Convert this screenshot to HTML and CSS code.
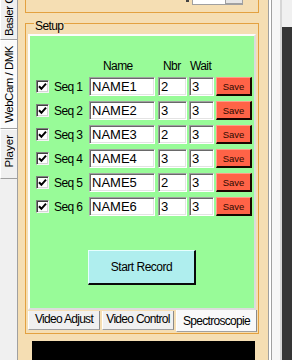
FILE: index.html
```html
<!DOCTYPE html>
<html lang="fr">
<head>
    <meta charset="UTF-8">
    <meta name="viewport" content="width=device-width, initial-scale=1.0">
    <title>Spectroscopie</title>
    <link rel="stylesheet" href="styles.css">
</head>
<body>
<div class="window">
    <!-- Onglets verticaux à gauche -->
    <div class="side-tabs">
        <div class="side-tab first"><span>Basler Cam</span></div>
        <div class="side-tab active"><span>WebCam / DMK</span></div>
        <div class="side-tab last"><span>Player</span></div>
    </div>

    <div class="main">
        <!-- Panneau du haut (coupé) -->
        <div class="top-panel">
            <span class="top-mark"></span>
            <span class="top-combo"><span class="top-combo-btn"></span></span>
        </div>

        <!-- Groupe Setup -->
        <div class="setup">
            <span class="setup-title">Setup</span>
            <div class="tab-control">
                <div class="tab-page">
                    <div class="seq-grid">
                        <span></span><span></span>
                        <span class="head head-name">Name</span>
                        <span class="head head-nbr">Nbr</span>
                        <span class="head head-wait">Wait</span>
                        <span></span>

                        <span class="check"><svg width="9" height="9" viewBox="0 0 9 9"><polyline points="1,4.2 3.4,6.8 8,1.6" fill="none" stroke="#000" stroke-width="2"/></svg></span>
                        <span class="seq-label">Seq 1</span>
                        <input class="field f-name" type="text" value="NAME1">
                        <input class="field f-nbr" type="text" value="2">
                        <input class="field f-wait" type="text" value="3">
                        <button class="save">Save</button>

                        <span class="check"><svg width="9" height="9" viewBox="0 0 9 9"><polyline points="1,4.2 3.4,6.8 8,1.6" fill="none" stroke="#000" stroke-width="2"/></svg></span>
                        <span class="seq-label">Seq 2</span>
                        <input class="field f-name" type="text" value="NAME2">
                        <input class="field f-nbr" type="text" value="3">
                        <input class="field f-wait" type="text" value="3">
                        <button class="save">Save</button>

                        <span class="check"><svg width="9" height="9" viewBox="0 0 9 9"><polyline points="1,4.2 3.4,6.8 8,1.6" fill="none" stroke="#000" stroke-width="2"/></svg></span>
                        <span class="seq-label">Seq 3</span>
                        <input class="field f-name" type="text" value="NAME3">
                        <input class="field f-nbr" type="text" value="2">
                        <input class="field f-wait" type="text" value="3">
                        <button class="save">Save</button>

                        <span class="check"><svg width="9" height="9" viewBox="0 0 9 9"><polyline points="1,4.2 3.4,6.8 8,1.6" fill="none" stroke="#000" stroke-width="2"/></svg></span>
                        <span class="seq-label">Seq 4</span>
                        <input class="field f-name" type="text" value="NAME4">
                        <input class="field f-nbr" type="text" value="3">
                        <input class="field f-wait" type="text" value="3">
                        <button class="save">Save</button>

                        <span class="check"><svg width="9" height="9" viewBox="0 0 9 9"><polyline points="1,4.2 3.4,6.8 8,1.6" fill="none" stroke="#000" stroke-width="2"/></svg></span>
                        <span class="seq-label">Seq 5</span>
                        <input class="field f-name" type="text" value="NAME5">
                        <input class="field f-nbr" type="text" value="2">
                        <input class="field f-wait" type="text" value="3">
                        <button class="save">Save</button>

                        <span class="check"><svg width="9" height="9" viewBox="0 0 9 9"><polyline points="1,4.2 3.4,6.8 8,1.6" fill="none" stroke="#000" stroke-width="2"/></svg></span>
                        <span class="seq-label">Seq 6</span>
                        <input class="field f-name" type="text" value="NAME6">
                        <input class="field f-nbr" type="text" value="3">
                        <input class="field f-wait" type="text" value="3">
                        <button class="save">Save</button>
                    </div>

                    <button class="start-btn">Start Record</button>
                </div>

                <!-- Onglets du bas -->
                <div class="tab-strip">
                    <div class="tab tab-adjust">Video Adjust</div>
                    <div class="tab tab-control-v">Video Control</div>
                    <div class="tab tab-spectro selected">Spectroscopie</div>
                </div>
            </div>
        </div>

        <!-- Zone vidéo -->
        <div class="video"></div>
    </div>

    <!-- Bord droit -->
    <div class="right-strip">
        <span class="rs-line"></span>
        <span class="rs-white"></span>
        <span class="rs-line"></span>
        <span class="rs-light"></span>
        <span class="rs-edge"></span>
        <span class="rs-dark"></span>
    </div>
</div>
</body>
</html>
```

FILE: styles.css
```css
/* Fenêtre de base */
body {
    margin: 0;
    width: 292px;
    height: 360px;
    overflow: hidden;
    background-color: #f0f0f0;
    font-family: "Liberation Sans", Arial, sans-serif;
    font-size: 12px;
    letter-spacing: -0.6px;
    color: #000;
}

.window {
    display: flex;
    height: 360px;
}

/* Onglets verticaux */
.side-tabs {
    width: 17px;
    border-right: 1px solid #a0a0a0;
    display: flex;
    flex-direction: column;
    background-color: #f0f0f0;
}

.side-tab {
    box-sizing: border-box;
    display: flex;
    flex-direction: column;
    justify-content: center;
    align-items: center;
    overflow: hidden;
    border-bottom: 1px solid #a0a0a0;
    border-top: 1px solid #fff;
    border-left: 1px solid #fff;
    font-size: 11.5px;
    letter-spacing: -0.5px;
}

.side-tab span {
    writing-mode: vertical-rl;
    transform: rotate(180deg);
    white-space: nowrap;
    line-height: 15px;
}

.side-tab.first {
    height: 40px;
    border-top: none;
    justify-content: flex-end;
    padding-bottom: 3px;
}

.side-tab.active {
    height: 89px;
    background-color: #fbfbfb;
}

.side-tab.last {
    height: 50px;
    padding-bottom: 6px;
    letter-spacing: 0;
}

/* Zone principale beige */
.main {
    width: 250px;
    box-sizing: border-box;
    padding-left: 7px;
    background-color: #f5deb3;
}

.top-panel {
    box-sizing: border-box;
    width: 234px;
    height: 13px;
    border: 1px solid #e3a140;
    border-top: none;
    display: flex;
    align-items: flex-start;
    padding-left: 160px;
}

.top-mark {
    width: 3px;
    height: 2px;
    background-color: #444;
}

.top-combo {
    box-sizing: border-box;
    width: 51px;
    height: 5px;
    margin-left: 3px;
    background-color: #fff;
    border: 1px solid #a0a0a0;
    border-top: none;
    display: flex;
    justify-content: flex-end;
}

.top-combo-btn {
    width: 16px;
    height: 3px;
    background-color: #e6e6e6;
    border-left: 1px solid #a0a0a0;
    border-bottom: 1px solid #a0a0a0;
}

/* Groupe Setup */
.setup {
    position: relative;
    box-sizing: border-box;
    width: 234px;
    height: 311px;
    margin-top: 10px;
    border: 1px solid #e3a140;
    padding: 10px 0 1px 2px;
}

.setup-title {
    position: absolute;
    left: 8px;
    top: -5px;
    padding: 0 1px;
    line-height: 14px;
    background-color: #f5deb3;
}

.tab-control {
    width: 229px;
}

.tab-page {
    box-sizing: border-box;
    width: 228px;
    height: 276px;
    border: 2px solid;
    border-color: #fcfcfc #dcdcdc #dcdcdc #fcfcfc;
    background-color: #98fb98;
    padding: 17px 0 0 6px;
}

.seq-grid {
    display: grid;
    grid-template-columns: 13px 40px 69px 31px 27px 36px;
    grid-auto-rows: 19px;
    row-gap: 5px;
    align-items: center;
}

.head {
    align-self: end;
    line-height: 12px;
}

.head-name {
    padding-left: 14px;
}

.head-nbr {
    padding-left: 5px;
}

.head-wait {
    padding-left: 1px;
}

.check {
    box-sizing: border-box;
    width: 13px;
    height: 13px;
    background-color: #fff;
    border: 1px solid;
    border-color: #808080 #f4f4f4 #f4f4f4 #808080;
    box-shadow: inset 1px 1px 0 #404040, inset -1px -1px 0 #d4d4d4;
    display: flex;
    justify-content: center;
    align-items: center;
}

.seq-label {
    padding-left: 5px;
    white-space: nowrap;
}

.field {
    box-sizing: border-box;
    height: 19px;
    margin: 0;
    padding: 0 0 0 2px;
    border: 1px solid;
    border-color: #a0a0a0 #fff #fff #a0a0a0;
    box-shadow: inset 1px 1px 0 #696969, inset -1px -1px 0 #e3e3e3;
    background-color: #fff;
    font-family: "Liberation Sans", Arial, sans-serif;
    font-size: 13px;
    letter-spacing: 0;
    color: #000;
    outline: none;
}

.f-name {
    width: 66px;
}

.f-nbr {
    width: 29px;
}

.f-wait {
    width: 25px;
}

.save {
    box-sizing: border-box;
    width: 36px;
    height: 19px;
    margin: 0;
    padding: 0;
    background-color: #ff6347;
    border-style: solid;
    border-width: 1px 2px 2px 1px;
    border-color: #ff9c8a #1a0500 #1a0500 #ff9c8a;
    font-family: "Liberation Sans", Arial, sans-serif;
    font-size: 9.5px;
    letter-spacing: 0;
    color: #300a00;
}

/* Bouton Start Record */
.start-btn {
    display: block;
    box-sizing: border-box;
    width: 108px;
    height: 35px;
    margin: 34px 0 0 52px;
    padding: 0;
    background-color: #afeeee;
    border-style: solid;
    border-width: 1px 2px 2px 1px;
    border-color: #e6ffff #0a0a0a #0a0a0a #e6ffff;
    font-family: inherit;
    font-size: 12px;
    letter-spacing: -0.5px;
    color: #000;
}

/* Onglets du bas */
.tab-strip {
    display: flex;
    align-items: flex-start;
    gap: 2px;
    height: 22px;
}

.tab {
    box-sizing: border-box;
    height: 19px;
    margin-top: 1px;
    background-color: #f0f0f0;
    border-left: 1px solid #fff;
    border-right: 1px solid #8a8a8a;
    border-bottom: 1px solid #a0a0a0;
    text-align: center;
    line-height: 17px;
    letter-spacing: -0.7px;
    white-space: nowrap;
}

.tab-adjust {
    width: 72px;
}

.tab-control-v {
    width: 72px;
}

.tab-spectro {
    width: 81px;
}

.tab.selected {
    height: 22px;
    margin-top: 0;
    background-color: #f9f9f9;
    line-height: 23px;
}

/* Zone vidéo noire */
.video {
    width: 223px;
    height: 30px;
    margin: 7px 0 0 7px;
    background-color: #000;
}

/* Bord droit */
.right-strip {
    display: flex;
    width: 24px;
    height: 360px;
}

.rs-line {
    width: 1px;
    background-color: #a0a0a0;
}

.rs-white {
    width: 2px;
    background-color: #fff;
}

.rs-light {
    width: 8px;
    background-color: #f6f6f6;
}

.rs-edge {
    width: 2px;
    background-color: #d6d6d6;
}

.rs-dark {
    width: 10px;
    margin-top: 27px;
    background-color: #353535;
}
```
